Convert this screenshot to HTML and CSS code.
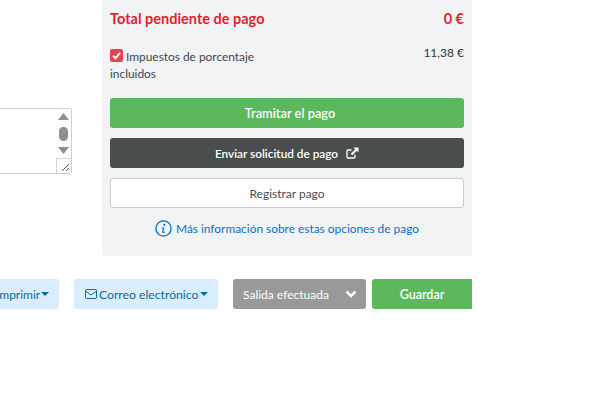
FILE: index.html
```html
<!DOCTYPE html>
<html lang="es">
<head>
<meta charset="utf-8">
<title>Pago</title>
<link rel="stylesheet" href="styles.css">
</head>
<body>
<div class="page">
  <div class="top">
    <div class="notes-col">
      <div class="notes">
        <div class="notes-text"></div>
        <div class="notes-side">
          <svg class="scroll-svg" width="15" height="49" viewBox="0 0 15 49">
            <path d="M7.5 4 L13 11 H2 Z" fill="#8f8f8f"/>
            <rect x="3" y="18" width="9" height="14" rx="4.5" fill="#8f8f8f"/>
            <path d="M2 38 H13 L7.5 45 Z" fill="#8f8f8f"/>
          </svg>
          <div class="resizer">
            <svg width="15" height="15" viewBox="0 0 15 15">
              <path d="M6 13 L13 6 M10 13 L13 10" stroke="#555" stroke-width="1" fill="none"/>
            </svg>
          </div>
        </div>
      </div>
    </div>
    <section class="panel">
      <div class="total-row">
        <span>Total pendiente de pago</span>
        <span>0 €</span>
      </div>
      <div class="tax-row">
        <div class="tax-label">
          <svg class="check" width="13" height="13" viewBox="0 0 13 13">
            <rect width="13" height="13" rx="2" fill="#e8434f"/>
            <path d="M3 6.8 L5.5 9.3 L10 3.8" stroke="#fff" stroke-width="2" fill="none"/>
          </svg>
          Impuestos de porcentaje incluidos
        </div>
        <div class="tax-value">11,38 €</div>
      </div>
      <div class="actions">
        <a class="btn btn-green">Tramitar el pago</a>
        <a class="btn btn-dark">Enviar solicitud de pago
          <svg class="ext" width="13" height="12" viewBox="0 0 13 12">
            <path d="M9 7.5 V10 a1 1 0 0 1 -1 1 H2 a1 1 0 0 1 -1 -1 V4 a1 1 0 0 1 1 -1 H5.5" stroke="#fff" stroke-width="1.3" fill="none"/>
            <path d="M7.5 0.5 H12.5 V5.5 L10.8 3.8 L6.3 8.3 L4.7 6.7 L9.2 2.2 Z" fill="#fff"/>
          </svg>
        </a>
        <a class="btn btn-white">Registrar pago</a>
      </div>
      <a class="info">
        <svg width="17" height="17" viewBox="0 0 17 17">
          <circle cx="8.5" cy="8.5" r="7.6" stroke="#0a6ed1" stroke-width="1.4" fill="none"/>
          <circle cx="9.3" cy="4.8" r="1.1" fill="#0a6ed1"/>
          <path d="M7 7.4 H9.4 L8.4 11.8 H10 L9.8 12.8 H6.9 L7.9 8.4 H6.8 Z" fill="#0a6ed1"/>
        </svg>
        Más información sobre estas opciones de pago
      </a>
    </section>
  </div>
  <div class="bottom">
    <a class="tool tool-print">Imprimir<span class="caret"></span></a>
    <a class="tool tool-mail">
      <svg class="mail" width="12" height="10" viewBox="0 0 12 10">
        <rect x="0.5" y="0.5" width="11" height="9" rx="1" stroke="#0b6a9c" fill="none"/>
        <path d="M0.5 2 L6 6 L11.5 2" stroke="#0b6a9c" fill="none"/>
      </svg>
      <span class="tool-text">Correo electrónico</span><span class="caret"></span>
    </a>
    <div class="status">
      <span>Salida efectuada</span>
      <svg width="12" height="8" viewBox="0 0 12 8">
        <path d="M1.5 1.5 L6 6 L10.5 1.5" stroke="#fff" stroke-width="2.6" fill="none"/>
      </svg>
    </div>
    <a class="save">Guardar</a>
  </div>
</div>
</body>
</html>
```
FILE: styles.css
```css
* { box-sizing: border-box; }
html, body { margin: 0; padding: 0; background: #fff; }
body { font-family: Lato, sans-serif; font-size: 12px; color: #3c4650; }
.page { width: 472px; height: 411px; overflow: hidden; }
.top { display: flex; gap: 30px; height: 256px; }
.notes-col { width: 72px; flex: none; padding-top: 108px; }
.notes { display: flex; justify-content: flex-end; width: 82px; height: 66px; margin-left: -10px; border: 1px solid #d0d0d0; border-radius: 2px; background: #fff; }
.notes-text { flex: 1; }
.notes-side { width: 15px; display: flex; flex-direction: column; justify-content: space-between; background: #fdfdfd; }
.scroll-svg { display: block; }
.resizer { width: 15px; height: 15px; border-left: 1px solid #d6d6d6; border-top: 1px solid #d6d6d6; }
.resizer svg { display: block; margin: -1px 0 0 -1px; }
.panel { width: 370px; flex: none; background: #f1f3f5; padding: 10px 8px 0; border-radius: 0 0 4px 4px; }
.total-row { display: flex; justify-content: space-between; font-size: 14.5px; font-weight: 700; line-height: 17px; color: #e21f2d; }
.tax-row { display: flex; justify-content: space-between; margin-top: 17px; }
.tax-label { width: 165px; padding-top: 4px; line-height: 17px; font-size: 11.9px; }
.check { vertical-align: -1px; }
.tax-value { font-size: 12px; line-height: 18px; color: #2f3842; }
.actions { display: flex; flex-direction: column; gap: 10px; margin-top: 16px; }
.btn { display: flex; justify-content: center; align-items: center; height: 30px; border-radius: 3px; font-size: 12px; }
.btn-green { background: #5cb85c; color: #fff; font-size: 12.8px; font-weight: 600; padding-left: 6px; }
.btn-dark { background: #4a4d4e; color: #fff; font-size: 11.8px; font-weight: 600; gap: 8px; }
.btn-white { background: #fff; color: #4a4d4e; border: 1px solid #ccc; }
.ext { display: block; }
.info { display: flex; justify-content: center; align-items: center; gap: 4px; margin-top: 11px; height: 18px; font-size: 11.9px; color: #0a6ed1; }
.bottom { display: flex; margin-top: 23px; margin-left: -15px; height: 30px; font-size: 12px; }
.tool { display: flex; align-items: center; height: 30px; padding: 0 10px 0 11px; background: #d9edfc; color: #0b6a9c; border-radius: 3px; white-space: nowrap; }
.tool-print { width: 74px; margin-right: 15px; }
.tool-mail { width: 144px; gap: 2px; margin-right: 15px; }
.mail { flex: none; }
.tool-text { font-size: 12.2px; }
.caret { flex: none; width: 0; height: 0; border-left: 4px solid transparent; border-right: 4px solid transparent; border-top: 4px solid #0b6a9c; }
.tool-print .caret { margin-left: 1px; }
.status { display: flex; justify-content: space-between; align-items: center; width: 133px; height: 30px; padding: 0 9px 0 10px; margin-right: 6px; background: #999; color: #fff; border-radius: 3px; }
.save { display: flex; justify-content: center; align-items: center; flex: none; width: 100px; height: 30px; background: #5cb85c; color: #fff; font-weight: 600; font-size: 12.5px; border-radius: 3px 0 0 3px; }
```
